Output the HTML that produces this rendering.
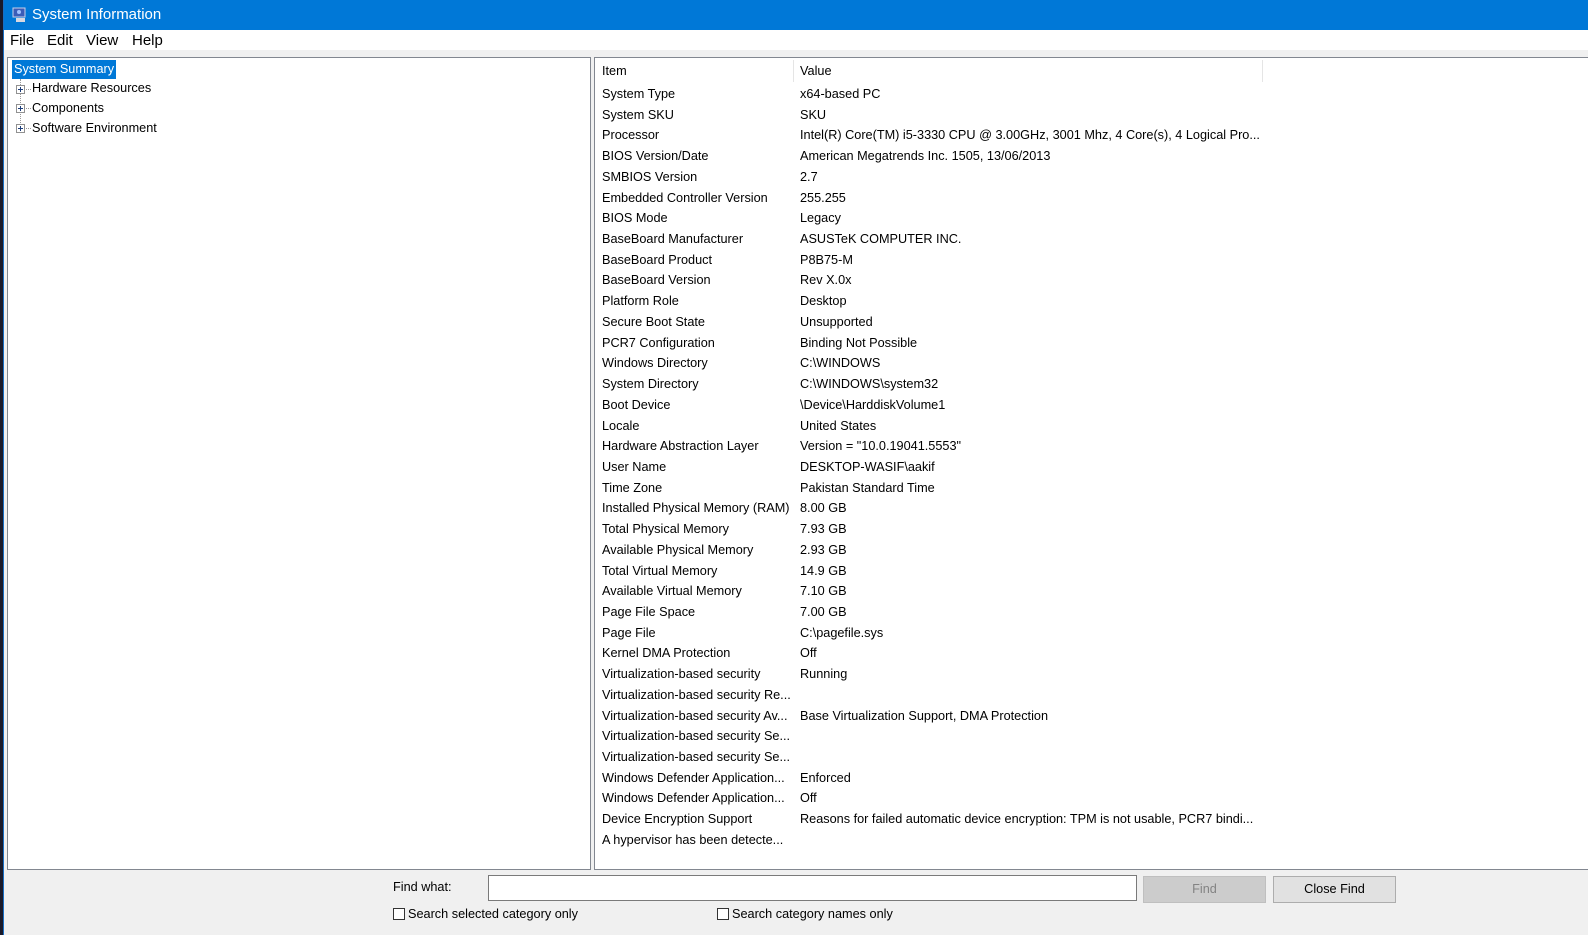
<!DOCTYPE html>
<html><head><meta charset="utf-8"><style>
*{margin:0;padding:0;box-sizing:border-box}
body{width:1588px;height:935px;overflow:hidden;background:#f0f0f0;font-family:"Liberation Sans",sans-serif;font-size:12.7px;color:#000;position:relative}
.strip{position:absolute;left:0;top:0;width:3px;height:935px;background:#1a1a2a}
.win{position:absolute;left:3px;top:0;right:0;bottom:0;background:#f0f0f0;border-left:1px solid #1a6fc4}
.title{position:absolute;left:0;top:0;right:0;height:30px;background:#0078d7;color:#fff;font-size:15px;line-height:29px;padding-left:28px}
.menu{position:absolute;left:0;top:30px;right:0;height:20px;background:#fff;font-size:15px;line-height:21px}
.menu span{position:absolute}
.lp{position:absolute;left:3px;top:57px;width:584px;height:813px;background:#fff;border:1px solid #828790}
.rp{position:absolute;left:590px;top:57px;right:0;height:813px;background:#fff;border:1px solid #828790;border-right:none}
.t{position:absolute;white-space:nowrap}
.row{position:absolute;left:7px;white-space:nowrap;height:20.72px;line-height:20px}
.row .v{position:absolute;left:198px}
.pl{position:absolute;width:9px;height:9px;border:1px solid #919191;background:#fff}
.pl:before{content:"";position:absolute;left:1px;top:3px;width:5px;height:1px;background:#1c3d7a}
.pl:after{content:"";position:absolute;left:3px;top:1px;width:1px;height:5px;background:#1c3d7a}
.cb{display:inline-block;width:12px;height:12px;border:1px solid #333;background:#fff;vertical-align:-2px;margin-right:3px}
</style></head><body>
<div class="strip"></div>
<div class="win">
<div class="title"><svg style="position:absolute;left:8px;top:7px" width="16" height="16" viewBox="0 0 16 16"><rect x="1" y="1" width="12" height="9" fill="#3b5db8" stroke="#c8d0e8"/><rect x="4" y="11" width="9" height="4" fill="#d8d8e0"/><circle cx="7" cy="5" r="2" fill="#a0c0ff"/></svg>System Information</div>
<div class="menu"><span style="left:6px">File</span><span style="left:43px">Edit</span><span style="left:82px">View</span><span style="left:128px">Help</span></div>
<div class="lp">
<div class="t" style="left:4px;top:2px;background:#0078d7;color:#fff;padding:0 2px;height:19px;line-height:19px">System Summary</div>
<div style="position:absolute;left:12px;top:21px;height:52px;border-left:1px dotted #999"></div>
<div class="pl" style="left:8px;top:27px"></div><div style="position:absolute;left:18px;top:31px;width:5px;border-top:1px dotted #999"></div><div class="t" style="left:24px;top:23px">Hardware Resources</div>
<div class="pl" style="left:8px;top:46px"></div><div style="position:absolute;left:18px;top:50px;width:5px;border-top:1px dotted #999"></div><div class="t" style="left:24px;top:43px">Components</div>
<div class="pl" style="left:8px;top:66px"></div><div style="position:absolute;left:18px;top:70px;width:5px;border-top:1px dotted #999"></div><div class="t" style="left:24px;top:63px">Software Environment</div>
</div>
<div class="rp">
<div class="t" style="left:7px;top:6px">Item</div>
<div style="position:absolute;left:198px;top:2px;height:22px;border-left:1px solid #e5e5e5"></div>
<div class="t" style="left:205px;top:6px">Value</div>
<div style="position:absolute;left:667px;top:2px;height:22px;border-left:1px solid #e5e5e5"></div>
<div style="position:absolute;left:0;top:26px;width:100%">
<div class="row" style="top:0px">System Type<span class="v">x64-based PC</span></div>
<div class="row" style="top:20.72px">System SKU<span class="v">SKU</span></div>
<div class="row" style="top:41.44px">Processor<span class="v">Intel(R) Core(TM) i5-3330 CPU @ 3.00GHz, 3001 Mhz, 4 Core(s), 4 Logical Pro...</span></div>
<div class="row" style="top:62.16px">BIOS Version/Date<span class="v">American Megatrends Inc. 1505, 13/06/2013</span></div>
<div class="row" style="top:82.88px">SMBIOS Version<span class="v">2.7</span></div>
<div class="row" style="top:103.6px">Embedded Controller Version<span class="v">255.255</span></div>
<div class="row" style="top:124.32px">BIOS Mode<span class="v">Legacy</span></div>
<div class="row" style="top:145.04px">BaseBoard Manufacturer<span class="v">ASUSTeK COMPUTER INC.</span></div>
<div class="row" style="top:165.76px">BaseBoard Product<span class="v">P8B75-M</span></div>
<div class="row" style="top:186.48px">BaseBoard Version<span class="v">Rev X.0x</span></div>
<div class="row" style="top:207.2px">Platform Role<span class="v">Desktop</span></div>
<div class="row" style="top:227.92px">Secure Boot State<span class="v">Unsupported</span></div>
<div class="row" style="top:248.64px">PCR7 Configuration<span class="v">Binding Not Possible</span></div>
<div class="row" style="top:269.36px">Windows Directory<span class="v">C:\WINDOWS</span></div>
<div class="row" style="top:290.08px">System Directory<span class="v">C:\WINDOWS\system32</span></div>
<div class="row" style="top:310.8px">Boot Device<span class="v">\Device\HarddiskVolume1</span></div>
<div class="row" style="top:331.52px">Locale<span class="v">United States</span></div>
<div class="row" style="top:352.24px">Hardware Abstraction Layer<span class="v">Version = "10.0.19041.5553"</span></div>
<div class="row" style="top:372.96px">User Name<span class="v">DESKTOP-WASIF\aakif</span></div>
<div class="row" style="top:393.68px">Time Zone<span class="v">Pakistan Standard Time</span></div>
<div class="row" style="top:414.4px">Installed Physical Memory (RAM)<span class="v">8.00 GB</span></div>
<div class="row" style="top:435.12px">Total Physical Memory<span class="v">7.93 GB</span></div>
<div class="row" style="top:455.84px">Available Physical Memory<span class="v">2.93 GB</span></div>
<div class="row" style="top:476.56px">Total Virtual Memory<span class="v">14.9 GB</span></div>
<div class="row" style="top:497.28px">Available Virtual Memory<span class="v">7.10 GB</span></div>
<div class="row" style="top:518px">Page File Space<span class="v">7.00 GB</span></div>
<div class="row" style="top:538.72px">Page File<span class="v">C:\pagefile.sys</span></div>
<div class="row" style="top:559.44px">Kernel DMA Protection<span class="v">Off</span></div>
<div class="row" style="top:580.16px">Virtualization-based security<span class="v">Running</span></div>
<div class="row" style="top:600.88px">Virtualization-based security Re...</div>
<div class="row" style="top:621.6px">Virtualization-based security Av...<span class="v">Base Virtualization Support, DMA Protection</span></div>
<div class="row" style="top:642.32px">Virtualization-based security Se...</div>
<div class="row" style="top:663.04px">Virtualization-based security Se...</div>
<div class="row" style="top:683.76px">Windows Defender Application...<span class="v">Enforced</span></div>
<div class="row" style="top:704.48px">Windows Defender Application...<span class="v">Off</span></div>
<div class="row" style="top:725.2px">Device Encryption Support<span class="v">Reasons for failed automatic device encryption: TPM is not usable, PCR7 bindi...</span></div>
<div class="row" style="top:745.92px">A hypervisor has been detecte...</div>
</div>
</div>
<div class="t" style="left:389px;top:880px">Find what:</div>
<div style="position:absolute;left:484px;top:875px;width:649px;height:26px;background:#fff;border:1px solid #7a7a7a"></div>
<div class="t" style="left:1139px;top:876px;width:123px;height:27px;background:#cccccc;border:1px solid #bfbfbf;color:#838383;text-align:center;line-height:25px">Find</div>
<div class="t" style="left:1269px;top:876px;width:123px;height:27px;background:#e1e1e1;border:1px solid #adadad;text-align:center;line-height:25px">Close Find</div>
<div class="t" style="left:389px;top:907px"><span class="cb"></span>Search selected category only</div>
<div class="t" style="left:713px;top:907px"><span class="cb"></span>Search category names only</div>
</div>
</body></html>
